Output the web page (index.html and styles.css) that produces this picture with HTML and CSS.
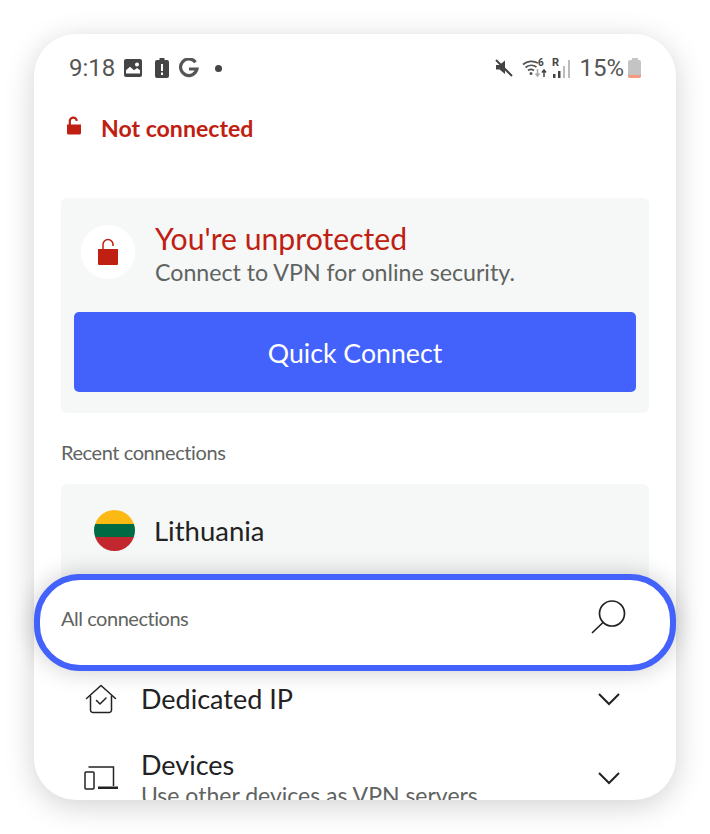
FILE: index.html
```html
<!DOCTYPE html>
<html lang="en">
<head>
  <meta charset="UTF-8" />
  <meta name="viewport" content="width=device-width, initial-scale=1.0"/>
  <title>VPN status</title>
  <link rel="stylesheet" href="styles.css">
</head>
<body>

<div class="phone">
  <div class="screen">

    <!-- Status bar -->
    <div class="status-bar">
      <div class="status-left">
        <span class="clock">9:18</span>
        <svg class="st-image" width="20" height="20" viewBox="0 0 20 20"><path fill="#444" fill-rule="evenodd" d="M3 1h14a2 2 0 0 1 2 2v14a2 2 0 0 1-2 2H3a2 2 0 0 1-2-2V3a2 2 0 0 1 2-2zm11 3.500a2 2 0 1 0 0 4 2 2 0 0 0 0-4zM3 15.500h14v-3.300l-3-2.200-3 2.200-4-3.400-4 3.400z"/></svg>
        <svg class="st-batt" width="14" height="20" viewBox="0 0 14 20"><path fill="#444" fill-rule="evenodd" d="M4.500 0h5v2H12a2 2 0 0 1 2 2v14a2 2 0 0 1-2 2H2a2 2 0 0 1-2-2V4a2 2 0 0 1 2-2h2.500zM6 6v7h2V6zm0 8.500V17h2v-2.500z"/></svg>
        <svg class="st-g" width="20" height="20" viewBox="0 0 20 20"><path fill="none" stroke="#555" stroke-width="3.200" d="M16.500 4.200A8.300 8.300 0 1 0 18 11H10"/></svg>
        <span class="dot"></span>
      </div>
      <div class="status-right">
        <svg class="st-mute" width="20" height="20" viewBox="0 0 20 20"><path fill="#444" d="M2 7h3.500L11 2.500V16l-5.500-4.500H2z"/><path stroke="#444" stroke-width="2" d="M2 2l16 16"/></svg>
        <svg class="wifi" width="26" height="22" viewBox="0 0 26 22">
          <g fill="none" stroke="#555" stroke-width="1.700"><path d="M1 7.500a13 13 0 0 1 15-1.500"/><path d="M3.500 10.500a9 9 0 0 1 11-.5"/><path d="M6 13.500a5 5 0 0 1 6 0"/></g>
          <circle cx="9" cy="16.500" r="1.500" fill="#555"/>
          <text class="wifi-six" x="16" y="9">6</text>
          <path stroke="#aaa" stroke-width="1.500" fill="none" d="M15.500 12v7m-2-2.500l2 2.500 2-2.500"/>
          <path stroke="#444" stroke-width="1.500" fill="none" d="M22 20v-7m-2 2.500l2-2.500 2 2.500"/>
        </svg>
        <svg class="signal" width="20" height="24" viewBox="0 0 20 24">
          <text class="signal-r" x="0" y="10">R</text>
          <rect x="1" y="18" width="2.500" height="4" fill="#444"/>
          <rect x="6" y="15" width="2.500" height="7" fill="#444"/>
          <rect x="11" y="10" width="2" height="12" fill="#bbb"/>
          <rect x="16" y="4" width="2" height="18" fill="#bbb"/>
        </svg>
        <span class="battery-text">15%</span>
        <div class="battery"><div class="battery-cap"></div><div class="battery-body"><div class="battery-level"></div></div></div>
      </div>
    </div>

    <div class="conn-state">
      <svg width="16" height="20" viewBox="0 0 16 20"><path fill="#bf2012" d="M1 8.500h14v8.500a1.500 1.500 0 0 1-1.500 1.500h-11A1.500 1.500 0 0 1 1 17z"/><path fill="none" stroke="#bf2012" stroke-width="2.200" d="M3.800 9V5.500a3.500 3.500 0 0 1 7-.7"/></svg>
      <span>Not connected</span>
    </div>

    <!-- Status card -->
    <div class="card protect-card">
      <div class="protect-head">
        <div class="lock-circle">
          <svg width="22" height="28" viewBox="0 0 22 28"><path fill="#bf2012" d="M1 11h20v15a1 1 0 0 1-1 1H2a1 1 0 0 1-1-1z"/><path fill="none" stroke="#bf2012" stroke-width="1.500" d="M6 11V6.500a5 5 0 0 1 10 0V8"/></svg>
        </div>
        <div>
          <div class="protect-title">You're unprotected</div>
          <div class="protect-sub">Connect to VPN for online security.</div>
        </div>
      </div>
      <button class="quick-btn">Quick Connect</button>
    </div>

    <div class="section-label">Recent connections</div>

    <div class="card recent-card">
      <div class="flag"><span class="flag-y"></span><span class="flag-g"></span><span class="flag-r"></span></div>
      <span class="country">Lithuania</span>
    </div>

    <div class="list-row row-ip">
      <svg class="row-icon" width="32" height="30" viewBox="0 0 32 30"><g fill="none" stroke="#222" stroke-width="1.500" stroke-linecap="round" stroke-linejoin="round"><path d="M1.500 14.500L16 1.500l14.500 13"/><path d="M5.500 12v14a2.500 2.500 0 0 0 2.500 2.500h16a2.500 2.500 0 0 0 2.500-2.500V12"/><path d="M11.500 16.500l3.500 3.500 6-6"/></g></svg>
      <div class="row-text">
        <div class="row-title">Dedicated IP</div>
      </div>
      <svg class="chevron" width="24" height="14" viewBox="0 0 24 14"><path fill="none" stroke="#222" stroke-width="2" d="M2 2l10 10L22 2"/></svg>
    </div>

    <div class="list-row row-devices">
      <svg class="row-icon" width="34" height="24" viewBox="0 0 34 24"><g fill="none" stroke="#222" stroke-width="1.500"><path d="M4.500 1h25v19"/><rect x="1" y="6" width="9" height="17" rx="1"/></g><path stroke="#222" stroke-width="2.500" d="M14 21.800h20"/></svg>
      <div class="row-text">
        <div class="row-title">Devices</div>
        <div class="row-sub">Use other devices as VPN servers</div>
      </div>
      <svg class="chevron" width="24" height="14" viewBox="0 0 24 14"><path fill="none" stroke="#222" stroke-width="2" d="M2 2l10 10L22 2"/></svg>
    </div>
  </div>

  <!-- Highlighted search bar, sits over the list -->
  <div class="search-bar">
    <span>All connections</span>
    <svg width="38" height="38" viewBox="0 0 38 38"><g fill="none" stroke="#222" stroke-width="1.700" stroke-linecap="round"><circle cx="22" cy="14.500" r="12.500"/><path d="M13 23.500L2.500 33.500"/></g></svg>
  </div>
</div>

</body>
</html>
```
FILE: styles.css
```css
body {
  margin: 0; padding: 34px; background: #fff;
  font-family: Lato, "Open Sans", sans-serif;
}
.phone {
  position: relative; width: 642px; height: 766px;
  border-radius: 42px; background: #fff;
  box-shadow: 0 6px 30px rgba(0, 0, 0, 0.18);
}
.screen {
  height: 100%; overflow: hidden; border-radius: 42px;
  box-sizing: border-box; padding: 0 27px;
}
.status-bar {
  display: flex; justify-content: space-between; align-items: center;
  height: 24px; margin: 22px 8px 0 8px; color: #444;
}
.status-left { display: flex; align-items: center; }
.clock { font-family: Roboto, sans-serif; font-size: 24px; color: #555; width: 54px; }
.st-batt { margin-left: 12px; }
.st-g { margin-left: 10px; }
.dot { width: 7px; height: 7px; border-radius: 50%; background: #444; margin-left: 16px; }
.status-right { display: flex; align-items: center; }
.wifi { margin-left: 8px; }
.signal { margin-left: 4px; }
.wifi-six { font-family: Roboto, sans-serif; font-size: 10px; font-weight: 700; fill: #444; }
.signal-r { font-family: Roboto, sans-serif; font-size: 11px; font-weight: 700; fill: #444; }
.battery-text { font-family: Roboto, sans-serif; font-size: 24px; color: #555; margin-left: 7px; }
.battery { display: flex; flex-direction: column; align-items: center; margin-left: 4px; }
.battery-cap { width: 6px; height: 2px; background: #c4c4c4; }
.battery-body {
  width: 13px; height: 18px; background: #c4c4c4; border-radius: 2px;
  display: flex; flex-direction: column; justify-content: flex-end; overflow: hidden;
}
.battery-level { height: 3px; background: #f39a80; }

.conn-state {
  display: flex; align-items: center; gap: 19px; margin: 32px 0 0 5px;
  font-size: 23.100px; font-weight: 700; color: #bf2012; height: 32px;
}
.conn-state svg { margin-top: -4px; }

.card { background: #f6f8f8; border-radius: 6px; }
.protect-card {
  margin-top: 54px; height: 215px; box-sizing: border-box; padding: 24px 13px 0 13px;
}
.protect-head { display: flex; align-items: flex-start; gap: 20px; margin-left: 7px; }
.lock-circle {
  width: 54px; height: 54px; margin-top: 3px; border-radius: 50%; background: #fff;
  display: flex; align-items: center; justify-content: center;
}
.protect-title { font-size: 30.200px; color: #bf2012; line-height: 32px; }
.protect-sub { font-size: 23.200px; color: #5f6361; line-height: 30px; margin-top: 3px; }
.quick-btn {
  display: block; width: 100%; height: 80px; margin-top: 25px; padding: 2px 0 0;
  border: none; border-radius: 5px; background: #4361fb; color: #fff;
  font-family: inherit; font-size: 26.700px;
}
.section-label { margin-top: 27px; font-size: 20px; color: #5f6361; line-height: 25px; letter-spacing: -0.42px; }
.recent-card {
  margin-top: 19px; height: 150px; box-sizing: border-box; padding: 26px 0 0 33px;
  display: flex; align-items: flex-start; gap: 19px;
}
.flag {
  width: 41px; height: 41px; border-radius: 50%; overflow: hidden;
  display: flex; flex-direction: column;
}
.flag span { flex: 1; }
.flag-y { background: #fdb913; }
.flag-g { background: #006a44; }
.flag-r { background: #c1272d; }
.country { font-size: 27.500px; color: #222; line-height: 42px; }

.list-row { display: flex; align-items: center; color: #222; padding-left: 23px; }
.row-ip { margin-top: 48px; }
.row-devices { margin-top: 32px; }
.row-icon { flex: none; width: 34px; }
.row-text { flex: 1; margin-left: 23px; }
.row-title { font-size: 27px; line-height: 34px; }
.row-sub { font-size: 23px; color: #5f6361; line-height: 26px; white-space: nowrap; }
.chevron { flex: none; margin-right: 28px; }

.search-bar {
  position: absolute; left: 0; right: 0; top: 540px; height: 97px;
  box-sizing: border-box; border: 6px solid #4361fb; border-radius: 46px;
  background: #fff; display: flex; align-items: center; justify-content: space-between;
  padding: 0 42px 10px 21px; color: #5f6361; font-size: 20px; letter-spacing: -0.47px;
  box-shadow: 0 0 24px rgba(0, 0, 0, 0.2);
}
```
